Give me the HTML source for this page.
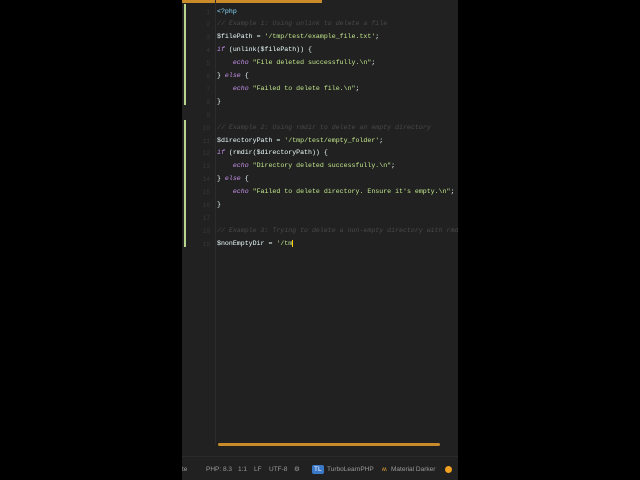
<html><head><style>
body{margin:0;background:#000;width:640px;height:480px;overflow:hidden;position:relative;font-family:"Liberation Mono",monospace}
#ed{position:absolute;left:182px;top:0;width:276px;height:480px;background:#212121;overflow:hidden}
.ln{position:absolute;left:0;width:28px;text-align:right;color:#383838;font-size:6px}
.c{position:absolute;left:35px;white-space:pre;font-size:6.6px;color:#eeffff}
.cm{color:#4a4a4a;font-style:italic}.s{color:#c3e88d}.k{color:#c792ea;font-style:italic}.v{color:#eeffff}.p{color:#89ddff}
.st span{position:absolute;top:0;line-height:9px}
</style></head><body>
<div id="ed">
<div style="position:absolute;left:0;top:0;width:140px;height:3px;background:#c98a2a"></div>
<div style="position:absolute;left:2px;top:4px;width:2px;height:101px;background:#b5d68c"></div>
<div style="position:absolute;left:2px;top:120px;width:2px;height:127px;background:#b5d68c"></div>
<div style="position:absolute;left:33px;top:0;width:1px;height:445px;background:#2c2c2c"></div>
<div style="position:absolute;left:36px;top:443px;width:222px;height:3px;border-radius:2px;background:#c98a2a"></div>
<div style="position:absolute;left:0;top:456px;width:276px;height:1px;background:#2a2a2a"></div>
<div id="lines"></div>
<div class="st" style="position:absolute;top:465px;left:0;width:276px;height:9px;font-family:'Liberation Sans',sans-serif;font-size:6.5px;color:#9a9a9a;white-space:pre">
<span style="left:0">te</span><span style="left:24px">PHP: 8.3</span><span style="left:56px">1:1</span><span style="left:72px">LF</span><span style="left:87px">UTF-8</span><span style="left:112px">⚙</span><span style="left:130px;background:#3a78c8;color:#fff;padding:0 2px;border-radius:2px">TL</span><span style="left:145px">TurboLearnPHP</span><span style="left:200px;color:#e0a030">ʍ</span><span style="left:209px">Material Darker</span><span style="left:263px;top:1px;width:7px;height:7px;border-radius:50%;background:#f0a020"></span></div>
</div>
<script>
var L=[
'<span class="p">&lt;?php</span>',
'<span class="cm">// Example 1: Using unlink to delete a file</span>',
'$filePath = <span class="s">\'/tmp/test/example_file.txt\'</span>;',
'<span class="k">if</span> (unlink($filePath)) {',
'    <span class="k">echo</span> <span class="s">"File deleted successfully.\\n"</span>;',
'} <span class="k">else</span> {',
'    <span class="k">echo</span> <span class="s">"Failed to delete file.\\n"</span>;',
'}','',
'<span class="cm">// Example 2: Using rmdir to delete an empty directory</span>',
'$directoryPath = <span class="s">\'/tmp/test/empty_folder\'</span>;',
'<span class="k">if</span> (rmdir($directoryPath)) {',
'    <span class="k">echo</span> <span class="s">"Directory deleted successfully.\\n"</span>;',
'} <span class="k">else</span> {',
'    <span class="k">echo</span> <span class="s">"Failed to delete directory. Ensure it\'s empty.\\n"</span>;',
'}','',
'<span class="cm">// Example 3: Trying to delete a non-empty directory with rmdir</span>',
'$nonEmptyDir = <span class="s">\'/tm</span><span style="border-left:1px solid #fc0"></span>'];
var h='';for(var i=0;i<L.length;i++){var y=7.5+i*12.9;h+='<div class="ln" style="top:'+(y+1)+'px">'+(i+1)+'</div><div class="c" style="top:'+y+'px">'+L[i]+'</div>';}
document.getElementById('lines').innerHTML=h;
</script>
</body></html>
